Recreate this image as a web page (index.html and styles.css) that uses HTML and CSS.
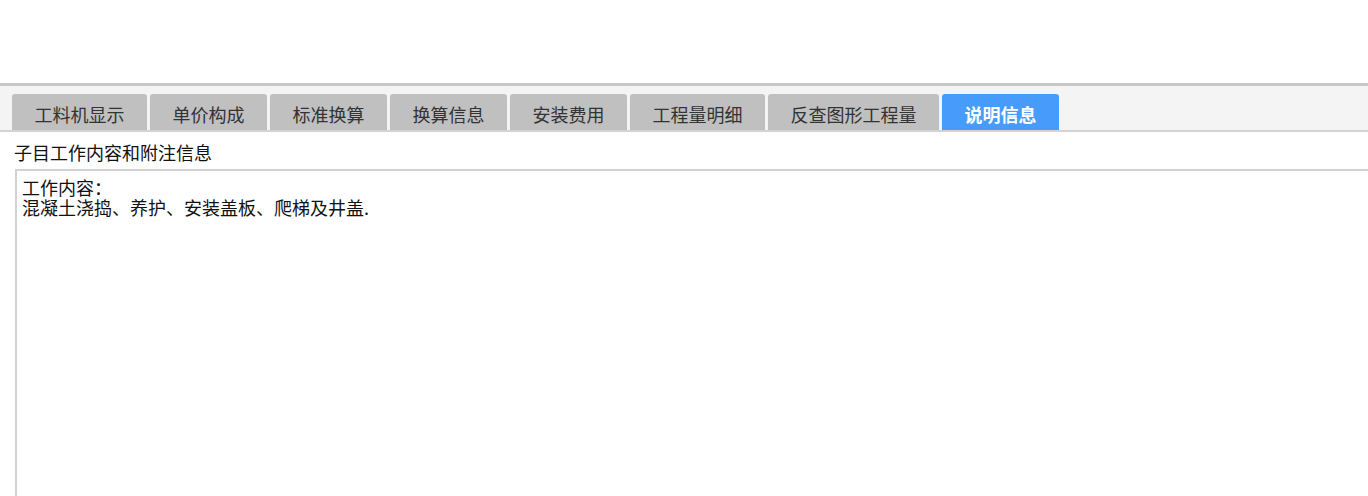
FILE: index.html
```html
<!DOCTYPE html>
<html lang="zh-CN">
<head>
<meta charset="utf-8">
<title>说明信息</title>
<link rel="stylesheet" href="styles.css">
</head>
<body>
<div class="page">
  <div class="top-space"></div>
  <div class="tabbar">
    <div class="tab">工料机显示</div>
    <div class="tab">单价构成</div>
    <div class="tab">标准换算</div>
    <div class="tab">换算信息</div>
    <div class="tab">安装费用</div>
    <div class="tab">工程量明细</div>
    <div class="tab">反查图形工程量</div>
    <div class="tab active">说明信息</div>
  </div>
  <div class="section-label">子目工作内容和附注信息</div>
  <div class="content-box">
    <div class="line">工作内容：</div>
    <div class="line">混凝土浇捣、养护、安装盖板、爬梯及井盖.</div>
  </div>
</div>
</body>
</html>
```

FILE: styles.css
```css
html, body {
  margin: 0;
  padding: 0;
  background: #ffffff;
  overflow: hidden;
}

.page {
  width: 1368px;
  height: 496px;
  overflow: hidden;
  font-family: "Noto Sans CJK SC", "Noto Sans", sans-serif;
  color: #1a1a1a;
}

.top-space {
  height: 83px;
}

.tabbar {
  display: flex;
  gap: 3px;
  align-items: flex-end;
  height: 44px;
  padding: 0 0 0 12px;
  background: #f4f4f4;
  border-top: 3px solid #c8c8c8;
  border-bottom: 2px solid #d3d3d3;
}

.tab {
  height: 32px;
  padding: 4px 22.5px 0;
  line-height: 32px;
  font-size: 18px;
  color: #333333;
  background: #c0c0c0;
  border-radius: 3px 3px 0 0;
  white-space: nowrap;
}

.tab.active {
  background: #479bfa;
  color: #ffffff;
  font-weight: bold;
}

.section-label {
  margin: 11px 0 0 14px;
  font-size: 18px;
  line-height: 18px;
  color: #111111;
}

.content-box {
  margin: 8px -20px 0 15px;
  height: 400px;
  border: 2px solid #d2d2d2;
  padding: 6px 5px;
}

.line {
  font-size: 18px;
  line-height: 20px;
  color: #111111;
  white-space: nowrap;
}
```
